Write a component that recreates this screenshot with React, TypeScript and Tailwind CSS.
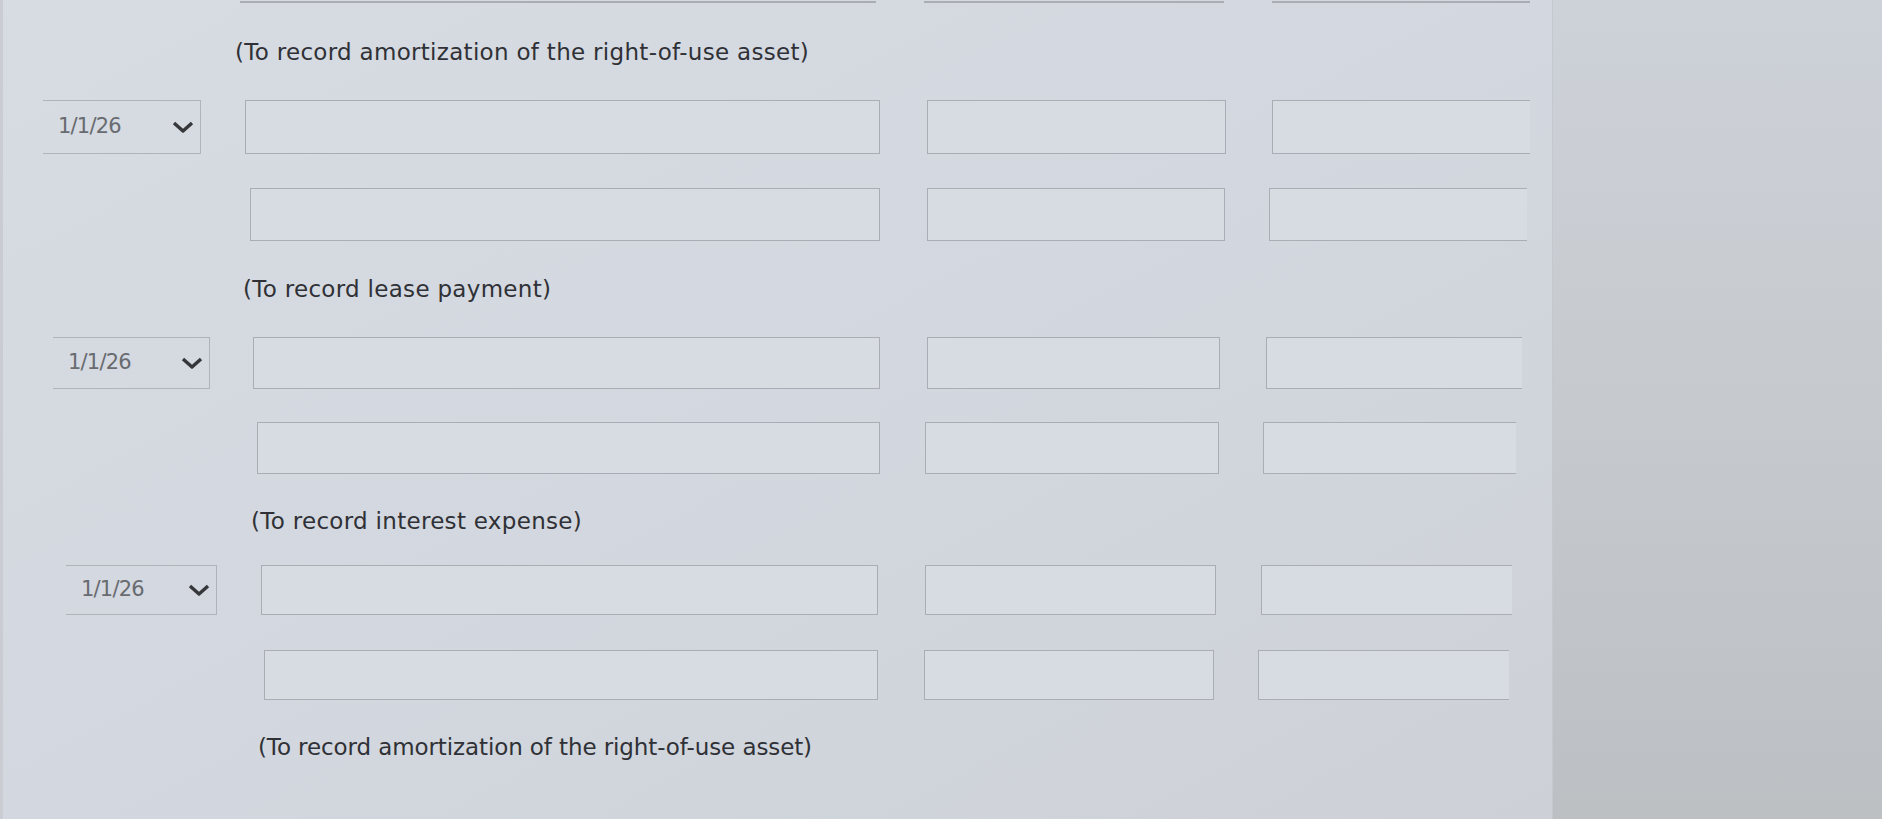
import React from 'react'

type Row = {
  key: string
  rowClass: string
  date?: string
  cells: string[]
}

type Block = {
  labelClass: string
  label: string
  rows: Row[]
}

const blocks: Block[] = [
  {
    labelClass: 'mt-[36px] ml-[232px]',
    label: '(To record amortization of the right-of-use asset)',
    rows: [
      {
        key: 'r1',
        rowClass: 'mt-[34px] h-[54px]',
        date: 'ml-[40px] w-[158px]',
        cells: ['ml-[44px] w-[635px]', 'ml-[47px] w-[299px]', 'ml-[46px] w-[258px]'],
      },
      {
        key: 'r2',
        rowClass: 'mt-[34px] h-[53px]',
        cells: ['ml-[247px] w-[630px]', 'ml-[47px] w-[298px]', 'ml-[44px] w-[258px]'],
      },
    ],
  },
  {
    labelClass: 'mt-[35px] ml-[240px]',
    label: '(To record lease payment)',
    rows: [
      {
        key: 'r3',
        rowClass: 'mt-[34px] h-[52px]',
        date: 'ml-[50px] w-[157px]',
        cells: ['ml-[43px] w-[627px]', 'ml-[47px] w-[293px]', 'ml-[46px] w-[256px]'],
      },
      {
        key: 'r4',
        rowClass: 'mt-[33px] h-[52px]',
        cells: ['ml-[254px] w-[623px]', 'ml-[45px] w-[294px]', 'ml-[44px] w-[253px]'],
      },
    ],
  },
  {
    labelClass: 'mt-[34px] ml-[248px]',
    label: '(To record interest expense)',
    rows: [
      {
        key: 'r5',
        rowClass: 'mt-[30px] h-[50px]',
        date: 'ml-[63px] w-[151px]',
        cells: ['ml-[44px] w-[617px]', 'ml-[47px] w-[291px]', 'ml-[45px] w-[251px]'],
      },
      {
        key: 'r6',
        rowClass: 'mt-[35px] h-[50px]',
        cells: ['ml-[261px] w-[614px]', 'ml-[46px] w-[290px]', 'ml-[44px] w-[251px]'],
      },
    ],
  },
]

const labelFont = { fontFamily: '"DejaVu Sans", Verdana, sans-serif' }

function DateSelect({ className }: { className: string }) {
  return (
    <div
      className={`${className} h-full flex items-center justify-between pl-[15px] pr-[5px] border-y-[1.5px] border-r border-[#b0b4ba]`}
    >
      <span className="text-[21px] text-[#686b70] tracking-[-0.8px]" style={labelFont}>
        1/1/26
      </span>
      <svg width="24" height="14" viewBox="0 0 24 14" fill="none">
        <path d="M3 3 L12 11 L21 3" stroke="#35373b" strokeWidth="3.4" strokeLinejoin="round" />
      </svg>
    </div>
  )
}

function EntryRow({ row }: { row: Row }) {
  return (
    <div className={`${row.rowClass} flex`}>
      {row.date && <DateSelect className={row.date} />}
      <div className={`${row.cells[0]} h-full border-[1.5px] border-[#aaaeb4] bg-[#d7dbe2]`} />
      <div className={`${row.cells[1]} h-full border-[1.5px] border-[#aaaeb4] bg-[#d7dbe2]`} />
      <div className={`${row.cells[2]} h-full border-y-[1.5px] border-l-[1.5px] border-[#aaaeb4] bg-[#d7dbe2]`} />
    </div>
  )
}

export default function App() {
  return (
    <div className="w-full h-[819px] flex overflow-hidden bg-[#d3d7df]">
      <div className="w-[1552px] h-full bg-gradient-to-br from-[#d7dbe2] via-[#d3d7df] to-[#cdd1d7] border-l-[3px] border-[#c9cdd3]">
        {/* cut off row from above */}
        <div className="h-[3px] flex">
          <div className="ml-[237px] w-[636px] h-full border-b-2 border-[#aaaeb4]" />
          <div className="ml-[48px] w-[300px] h-full border-b-2 border-[#aaaeb4]" />
          <div className="ml-[48px] w-[258px] h-full border-b-2 border-[#aaaeb4]" />
        </div>

        {blocks.map((b) => (
          <div key={b.label + b.labelClass}>
            <div
              className={`${b.labelClass} text-[23px] leading-[27px] text-[#2f3136] tracking-[0.3px]`}
              style={labelFont}
            >
              {b.label}
            </div>
            {b.rows.map((r) => (
              <EntryRow key={r.key} row={r} />
            ))}
          </div>
        ))}

        <div
          className="mt-[34px] ml-[255px] text-[23px] leading-[27px] text-[#2f3136] tracking-[-0.1px]"
          style={labelFont}
        >
          (To record amortization of the right-of-use asset)
        </div>
      </div>
      <div className="flex-1 h-full border-l border-[#c4c9cf] bg-gradient-to-b from-[#cdd2d8] via-[#c6cacf] to-[#bcc0c3]" />
    </div>
  )
}
